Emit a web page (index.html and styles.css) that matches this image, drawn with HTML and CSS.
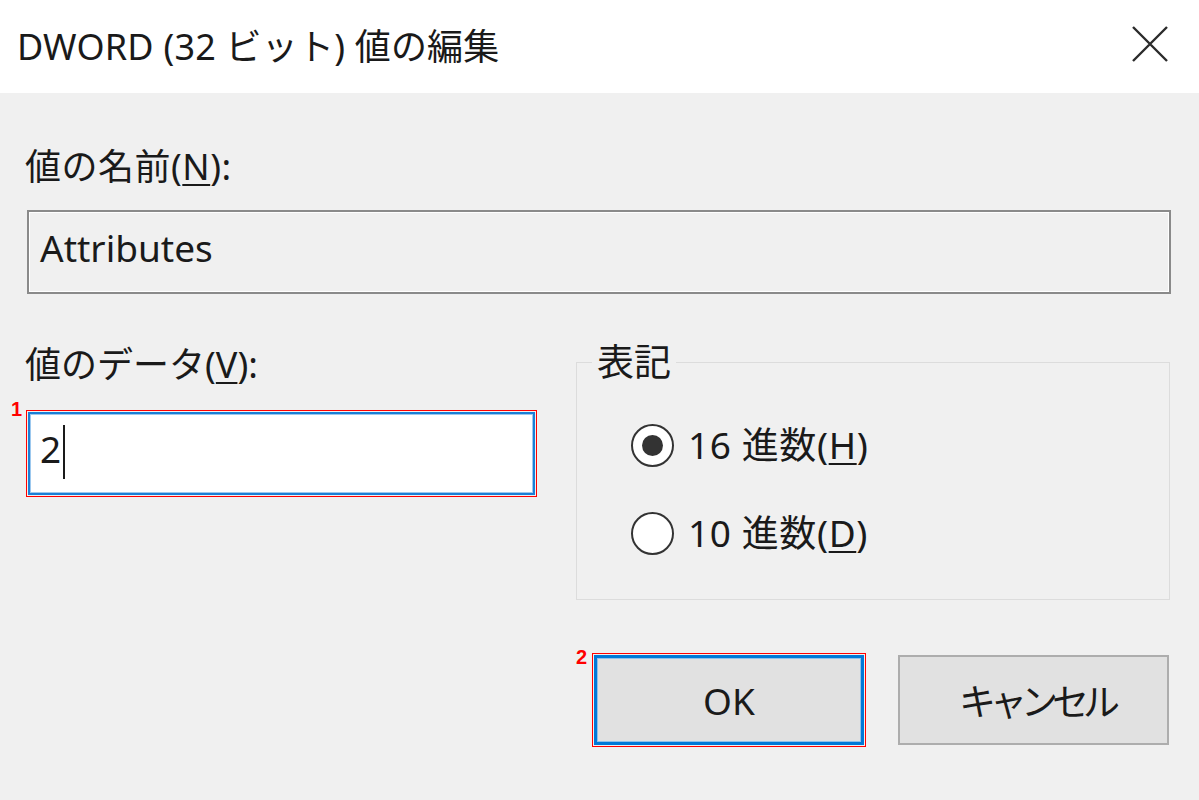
FILE: index.html
```html
<!DOCTYPE html>
<html lang="ja">
<head>
<meta charset="utf-8">
<title>DWORD (32 ビット) 値の編集</title>
<link rel="stylesheet" href="styles.css">
</head>
<body>
<div class="dialog">
  <div class="titlebar">
    <div class="title">DWORD (32 ビット) 値の編集</div>
    <svg class="close" width="36" height="36" viewBox="0 0 36 36" aria-hidden="true">
      <path d="M1 1 L35 35 M35 1 L1 35" stroke="#2b2b2b" stroke-width="2.4" fill="none"/>
    </svg>
  </div>
  <div class="content">
    <div class="label first">値の名前(<u>N</u>):</div>
    <div class="namefield">Attributes</div>
    <div class="lower">
      <div class="leftcol">
        <div class="label data">値のデータ(<u>V</u>):</div>
        <div class="datafield"><span class="mark mark1">1</span><span class="val">2</span><span class="caret"></span></div>
      </div>
      <fieldset class="group">
        <legend>表記</legend>
        <div class="radiorow r1"><span class="radio checked"></span><span class="rtext">16 進数(<u>H</u>)</span></div>
        <div class="radiorow r2"><span class="radio"></span><span class="rtext">10 進数(<u>D</u>)</span></div>
      </fieldset>
    </div>
    <div class="buttons">
      <div class="btn ok"><span class="mark mark2">2</span>OK</div>
      <div class="btn cancel"><span class="kana">キャンセル</span></div>
    </div>
  </div>
</div>
</body>
</html>
```
FILE: styles.css
```css
html, body {
  margin: 0;
  padding: 0;
}
body {
  width: 1199px;
  height: 800px;
  overflow: hidden;
  background: #f0f0f0;
  font-family: "Noto Sans", "Noto Sans CJK JP", sans-serif;
  color: #000;
}
.dialog {
  width: 1199px;
  height: 800px;
}
.titlebar {
  height: 93px;
  background: #ffffff;
  display: flex;
  align-items: center;
  justify-content: space-between;
  padding: 0 31px 0 17px;
  box-sizing: border-box;
}
.title {
  font-size: 36px;
  line-height: 44px;
  letter-spacing: 0.2px;
  color: #1a1a1a;
}
.close {
  display: block;
  margin-top: -6px;
}
.content {
  padding: 0 0 0 25px;
}
.label {
  font-size: 36px;
  line-height: 40px;
  height: 40px;
  letter-spacing: 0.5px;
  color: #1a1a1a;
}
.label u, .rtext u {
  text-underline-offset: 4px;
  text-decoration-thickness: 2px;
}
.label.first {
  margin-top: 54px;
}
.label.data {
  margin-top: 51px;
  letter-spacing: 0;
}
.namefield {
  margin-top: 23px;
  margin-left: 2px;
  width: 1144px;
  height: 84px;
  box-sizing: border-box;
  border: 2px solid #8a8a8a;
  box-shadow: inset 0 0 0 1px #ffffff;
  background: #f0f0f0;
  font-size: 37px;
  line-height: 72px;
  padding-left: 11px;
  color: #1a1a1a;
}
.lower {
  display: flex;
  align-items: flex-start;
}
.leftcol {
  width: 551px;
}
.datafield {
  position: relative;
  margin-top: 27px;
  margin-left: 3px;
  width: 507px;
  height: 83px;
  box-sizing: border-box;
  background: #ffffff;
  border: 2px solid #1a7fd6;
  box-shadow: inset 0 0 0 1px #9cc8ee;
  outline: 1px solid #ff0000;
  outline-offset: 1px;
  display: flex;
  align-items: center;
  padding-left: 10px;
  padding-bottom: 10px;
  font-size: 37px;
  color: #1a1a1a;
}
.val {
  line-height: 40px;
}
.caret {
  display: inline-block;
  width: 2px;
  height: 54px;
  background: #1a1a1a;
  margin-left: 2px;
  margin-top: 6px;
}
.mark {
  position: absolute;
  color: #ff0000;
  font-family: "Liberation Sans", Arial, sans-serif;
  font-weight: bold;
  font-size: 20px;
  line-height: 20px;
}
.mark1 {
  left: -19px;
  top: -15px;
}
.group {
  margin: 48px 0 0 0;
  padding: 0;
  width: 594px;
  height: 258px;
  box-sizing: border-box;
  border: 1px solid #dcdcdc;
}
.group legend {
  margin-left: 15px;
  padding: 0 5px;
  font-size: 37px;
  line-height: 40px;
  height: 40px;
  color: #1a1a1a;
}
.radiorow {
  display: flex;
  align-items: center;
  height: 44px;
  margin-left: 54px;
}
.radiorow.r1 {
  margin-top: 41px;
}
.radiorow.r2 {
  margin-top: 44px;
}
.radio {
  width: 43px;
  height: 43px;
  box-sizing: border-box;
  border: 2px solid #333333;
  border-radius: 50%;
  background: #ffffff;
  display: flex;
  align-items: center;
  justify-content: center;
  flex: none;
}
.radio.checked::after {
  content: "";
  width: 21px;
  height: 21px;
  border-radius: 50%;
  background: #333333;
}
.rtext {
  margin-left: 14px;
  font-size: 37px;
  line-height: 40px;
  letter-spacing: 0.6px;
  color: #1a1a1a;
}
.buttons {
  display: flex;
  justify-content: flex-end;
  gap: 34px;
  padding-right: 30px;
  margin-top: 55px;
}
.btn {
  position: relative;
  height: 90px;
  box-sizing: border-box;
  background: #e1e1e1;
  display: flex;
  align-items: center;
  justify-content: center;
  font-size: 37px;
  color: #1a1a1a;
}
.btn.ok {
  width: 270px;
  border: 3px solid #0078d7;
  box-shadow: inset 0 0 0 1px #8fc0ec;
  outline: 1px solid #ff0000;
  outline-offset: 1px;
}
.btn.cancel {
  width: 271px;
  border: 2px solid #adadad;
}
.kana {
  letter-spacing: -6px;
  margin-right: -6px;
}
.mark2 {
  left: -21px;
  top: -11px;
}
```
